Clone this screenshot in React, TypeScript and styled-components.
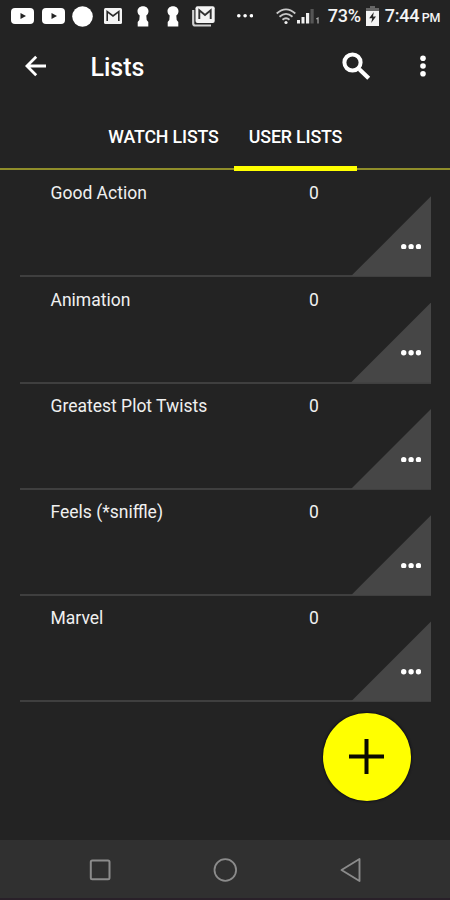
import React from "react";
import styled, { createGlobalStyle } from "styled-components";

const GlobalStyle = createGlobalStyle`
  * { box-sizing: border-box; }
  html, body { margin: 0; background: #232323; }
  body { font-family: Roboto, "Liberation Sans", sans-serif; overflow: hidden; }
  button { font: inherit; color: inherit; background: none; border: 0; padding: 0; }
  svg { display: block; flex: none; }
`;

const Screen = styled.div`
  width: 450px;
  height: 900px;
  display: flex;
  flex-direction: column;
  background: #232323;
  color: #fff;
  overflow: hidden;
`;

const StatusBar = styled.div`
  height: 32px;
  flex: none;
  display: flex;
  align-items: center;
  padding-left: 11px;
  color: #f4f4f4;
`;

const Slot = styled.span<{ $gap?: number }>`
  display: flex;
  flex: none;
  margin-left: ${(p) => p.$gap ?? 0}px;
`;

const StatusText = styled.span<{ $gap: number; $width: number; $size: number }>`
  flex: none;
  width: ${(p) => p.$width}px;
  margin-left: ${(p) => p.$gap}px;
  font-size: ${(p) => p.$size}px;
  line-height: 32px;
  height: 32px;
  font-weight: 500;
  letter-spacing: -0.2px;
  white-space: nowrap;
`;

const Meridiem = styled(StatusText)`
  height: 31px;
  padding-top: 1px;
`;

const AppBar = styled.header`
  height: 68px;
  flex: none;
  display: flex;
  align-items: center;
  padding: 0 24px 0 25px;
`;

const IconButton = styled.button`
  display: flex;
  flex: none;
`;

const Title = styled.h1`
  margin: 4px 0 0 43.500px;
  flex: 1;
  font-size: 25px;
  line-height: 30px;
  font-weight: 500;
`;

const Menu = styled(IconButton)`
  margin-left: 49px;
`;

const Tabs = styled.nav`
  height: 71px;
  flex: none;
  display: flex;
  padding-left: 93px;
  background: linear-gradient(#8f8d2a, #8f8d2a) 0 68px / 100% 2px no-repeat;
`;

const Tab = styled.button<{ $active?: boolean; $width: number }>`
  width: ${(p) => p.$width}px;
  height: 71px;
  display: flex;
  justify-content: center;
  padding-top: 26px;
  font-size: 17.8px;
  line-height: 22px;
  font-weight: 500;
  letter-spacing: -0.15px;
  white-space: nowrap;
  border-bottom: 5px solid ${(p) => (p.$active ? "#ffff00" : "transparent")};
`;

const Lists = styled.main`
  flex: 1;
  padding: 0 19px 0 20px;
`;

const Row = styled.section`
  height: 106.3px;
  display: grid;
  grid-template-columns: 258.5px 1fr 80px;
  padding-left: 30.5px;
  border-bottom: 2px solid #3f3f3f;
  color: #f0f0f0;
  font-size: 17.5px;
  line-height: 22px;
`;

const Name = styled.span`
  padding-top: 11.3px;
  white-space: nowrap;
`;

const Count = styled.span`
  padding-top: 11.3px;
`;

const Corner = styled.button`
  align-self: end;
  width: 80px;
  height: 80px;
  margin-bottom: -1px;
  padding: 21px 0 0 40px;
  display: flex;
  justify-content: center;
  align-items: center;
  background: #464646;
  clip-path: polygon(100% 0, 100% 100%, 0 100%);
`;

const AddButton = styled.button`
  position: absolute;
  left: 322.5px;
  top: 712.5px;
  width: 88px;
  height: 88px;
  border-radius: 50%;
  background: #ffff00;
  box-shadow: 0 0 2px 1px #101018;
  display: flex;
  align-items: center;
  justify-content: center;
`;

const NavBar = styled.footer`
  height: 60px;
  flex: none;
  display: grid;
  grid-template-columns: 125px 125px 125px;
  justify-content: center;
  align-items: center;
  justify-items: center;
  padding: 2px 0 0;
  background: #303030;
  border-bottom: 2px solid #292029;
  color: #8b8b8b;
`;

const VideoIcon = () => (
  <svg width="23" height="16" viewBox="0 0 23 16">
    <rect width="23" height="16" rx="4" fill="#fff" />
    <path d="M9.5 5v6L15 8z" fill="#232323" />
  </svg>
);

const DiscIcon = () => (
  <svg width="21" height="21" viewBox="0 0 21 21">
    <circle cx="10.5" cy="10.5" r="10.3" fill="#fff" />
  </svg>
);

const MailIcon = () => (
  <svg width="18" height="16" viewBox="0 0 18 16">
    <rect width="18" height="16" rx="1.5" fill="#f4f4f4" />
    <path d="M3.2 13V3.6L9 8l5.800-4.400V13" fill="none" stroke="#292929" strokeWidth="1.600" />
  </svg>
);

const KeyholeIcon = () => (
  <svg width="12" height="21" viewBox="0 0 12 21">
    <path d="M6 .3C2.600.3.500 2.500.500 5.300c0 2 .9 3.300 2.200 4.200L2.300 14 .7 16v4.600h10.600V16l-1.600-2-.4-4.500c1.300-.9 2.200-2.200 2.200-4.200C11.500 2.500 9.400.3 6 .3z" fill="#fff" />
  </svg>
);

const MailStackIcon = () => (
  <svg width="23" height="21" viewBox="0 0 23 21">
    <path d="M1.200 4v13.500q0 2 2 2H19" fill="none" stroke="#d0d0d0" strokeWidth="2.200" />
    <rect x="3.500" y=".3" width="19.200" height="16.700" rx="2" fill="#f4f4f4" />
    <path d="M7.300 13V4.300L13 9l5.700-4.700V13" fill="none" stroke="#333" strokeWidth="1.900" />
  </svg>
);

const EllipsisIcon = ({ size, pitch }: { size: number; pitch: number }) => (
  <svg width={pitch * 2 + size} height={size} fill="#fff">
    {[0, 1, 2].map((i) => (
      <circle key={i} cx={size / 2 + i * pitch} cy={size / 2} r={size / 2} />
    ))}
  </svg>
);

const WifiIcon = () => (
  <svg width="20" height="17" viewBox="0 0 20 17" fill="none" stroke="#c8c8c8" strokeWidth="1.800">
    <path d="M.7 5.500Q10-2.700 19.300 5.500M3.500 8.700q6.500-5.700 13 0M6.500 11.800q3.500-3 7 0" />
    <circle cx="10" cy="14.500" r="1.600" fill="#eee" stroke="none" />
  </svg>
);

const SignalIcon = () => (
  <svg width="24" height="16" viewBox="0 0 24 16" fill="#f0f0f0">
    <rect x="0" y="12" width="3" height="3.500" />
    <rect x="4.500" y="9" width="3" height="6.500" />
    <rect x="9" y="5" width="3.200" height="10.500" />
    <rect x="13.500" y="1" width="3.200" height="14.500" fill="#555" />
    <path d="M19.300 11l1.700-1v5.500" fill="none" stroke="#aaa" strokeWidth="1.200" />
  </svg>
);

const BatteryIcon = () => (
  <svg width="13" height="20" viewBox="0 0 13 20">
    <path d="M4 0h5v2h4v5H0V2h4z" fill="#666" />
    <path d="M0 5h13v15H0z" fill="#f4f4f4" />
    <path d="M7.800 6L3.200 12.200h3L5.200 17 10 10.500H7z" fill="#272727" />
  </svg>
);

const BackArrowIcon = () => (
  <svg width="22" height="22" viewBox="0 0 22 22" fill="none" stroke="#fff" strokeWidth="2.800">
    <path d="M11.200 1.700L1.900 11l9.300 9.300M2.500 11h18.500" />
  </svg>
);

const SearchIcon = () => (
  <svg width="29" height="29" viewBox="0 0 29 29" fill="none" stroke="#fff">
    <circle cx="10.500" cy="10.500" r="8.100" strokeWidth="4" />
    <path d="M17.300 17.300L26.700 26.300" strokeWidth="4.200" />
  </svg>
);

const MoreIcon = () => (
  <svg width="6" height="22" viewBox="0 0 6 22" fill="#fff">
    <circle cx="3" cy="3.300" r="2.800" />
    <circle cx="3" cy="11" r="2.800" />
    <circle cx="3" cy="18.700" r="2.800" />
  </svg>
);

const PlusIcon = () => (
  <svg width="35" height="35" viewBox="0 0 35 35" stroke="#0b0b00" strokeWidth="4">
    <path d="M17.500 0v35M0 17.500h35" />
  </svg>
);

const SquareIcon = () => (
  <svg width="22" height="22" viewBox="0 0 22 22" fill="none" stroke="currentColor" strokeWidth="2">
    <rect x="1.800" y="1.500" width="18.700" height="18.700" rx="1.500" />
  </svg>
);

const CircleIcon = () => (
  <svg width="24" height="24" viewBox="0 0 24 24" fill="none" stroke="currentColor" strokeWidth="1.800">
    <circle cx="12.300" cy="12" r="10.800" />
  </svg>
);

const TriangleIcon = () => (
  <svg width="22" height="26" viewBox="0 0 22 26" fill="none" stroke="currentColor" strokeWidth="1.900">
    <path d="M20.500 2v22L2.500 13z" strokeLinejoin="round" />
  </svg>
);

const lists = ["Good Action", "Animation", "Greatest Plot Twists", "Feels (*sniffle)", "Marvel"];

export default function App() {
  return (
    <Screen>
      <GlobalStyle />
      <StatusBar>
        <Slot><VideoIcon /></Slot>
        <Slot $gap={8}><VideoIcon /></Slot>
        <Slot $gap={7}><DiscIcon /></Slot>
        <Slot $gap={11}><MailIcon /></Slot>
        <Slot $gap={15}><KeyholeIcon /></Slot>
        <Slot $gap={18}><KeyholeIcon /></Slot>
        <Slot $gap={13}><MailStackIcon /></Slot>
        <Slot $gap={22}><EllipsisIcon size={3.6} pitch={6.3} /></Slot>
        <Slot $gap={23}><WifiIcon /></Slot>
        <Slot $gap={1}><SignalIcon /></Slot>
        <StatusText $gap={6.5} $width={34} $size={18}>73%</StatusText>
        <Slot $gap={4}><BatteryIcon /></Slot>
        <StatusText $gap={6} $width={37} $size={18}>7:44</StatusText>
        <Meridiem $gap={0} $width={18} $size={12.5}>PM</Meridiem>
      </StatusBar>
      <AppBar>
        <IconButton aria-label="Back"><BackArrowIcon /></IconButton>
        <Title>Lists</Title>
        <IconButton aria-label="Search"><SearchIcon /></IconButton>
        <Menu aria-label="More options"><MoreIcon /></Menu>
      </AppBar>
      <Tabs>
        <Tab $width={141}>WATCH LISTS</Tab>
        <Tab $width={123} $active>USER LISTS</Tab>
      </Tabs>
      <Lists>
        {lists.map((name) => (
          <Row key={name}>
            <Name>{name}</Name>
            <Count>0</Count>
            <Corner aria-label={`Options for ${name}`}>
              <EllipsisIcon size={5.4} pitch={7.4} />
            </Corner>
          </Row>
        ))}
      </Lists>
      <AddButton aria-label="Add list"><PlusIcon /></AddButton>
      <NavBar>
        <SquareIcon />
        <CircleIcon />
        <TriangleIcon />
      </NavBar>
    </Screen>
  );
}
